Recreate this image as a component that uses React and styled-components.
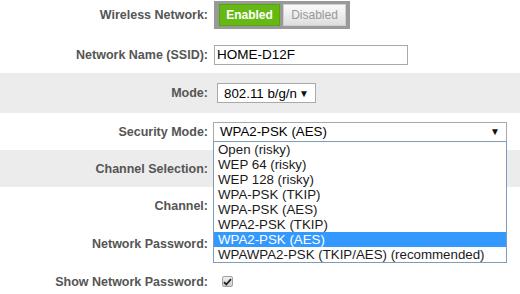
import React from "react";
import styled, { createGlobalStyle } from "styled-components";

const GlobalStyle = createGlobalStyle`
  body {
    margin: 0;
    background: #ffffff;
    font-family: "Liberation Sans", Arial, sans-serif;
  }
`;

const securityOptions = [
  "Open (risky)",
  "WEP 64 (risky)",
  "WEP 128 (risky)",
  "WPA-PSK (TKIP)",
  "WPA-PSK (AES)",
  "WPA2-PSK (TKIP)",
  "WPA2-PSK (AES)",
  "WPAWPA2-PSK (TKIP/AES) (recommended)",
];

const Check = () => (
  <svg width="9" height="8" viewBox="0 0 9 8">
    <path d="M1 4.2 L3.3 6.5 L8 1.2" fill="none" stroke="#222" strokeWidth="1.8" />
  </svg>
);

const App = () => {
  return (
    <>
      <GlobalStyle />
      <Form>
        <Row $h={30}>
          <Label>Wireless Network:</Label>
          <Toggle>
            <ToggleButton $on>Enabled</ToggleButton>
            <ToggleButton>Disabled</ToggleButton>
          </Toggle>
        </Row>
        <Row $h={43} $top={6}>
          <Label>Network Name (SSID):</Label>
          <TextInput>HOME-D12F</TextInput>
        </Row>
        <Row $h={40} $shade>
          <Label>Mode:</Label>
          <Select $w={99} $ml={3}>
            <span>802.11 b/g/n</span>
            <Arrow>▼</Arrow>
          </Select>
        </Row>
        <Row $h={37}>
          <Label>Security Mode:</Label>
          <SelectWrap>
            <Select $w={294} $ml={-1}>
              <span>WPA2-PSK (AES)</span>
              <Arrow>▼</Arrow>
            </Select>
            <OptionList>
              {securityOptions.map((opt) => (
                <Option key={opt} $active={opt === "WPA2-PSK (AES)"}>
                  {opt}
                </Option>
              ))}
            </OptionList>
          </SelectWrap>
        </Row>
        <Row $h={37} $shade>
          <Label>Channel Selection:</Label>
        </Row>
        <Row $h={38}>
          <Label>Channel:</Label>
        </Row>
        <Row $h={38}>
          <Label>Network Password:</Label>
        </Row>
        <Row $h={37}>
          <Label>Show Network Password:</Label>
          <CheckBox>
            <Check />
          </CheckBox>
        </Row>
      </Form>
    </>
  );
};

export default App;

const Form = styled.div`
  width: 520px;
  height: 294px;
  overflow: hidden;
`;

const Row = styled.div`
  display: flex;
  align-items: center;
  gap: 6px;
  height: ${(p) => p.$h}px;
  padding-top: ${(p) => p.$top || 0}px;
  box-sizing: border-box;
  background: ${(p) => (p.$shade ? "#ececec" : "#ffffff")};
`;

const Label = styled.div`
  width: 208px;
  flex-shrink: 0;
  text-align: right;
  font-size: 12.5px;
  font-weight: bold;
  color: #555555;
`;

const Toggle = styled.div`
  display: flex;
  gap: 3px;
  padding: 3px 4px 3px 5px;
  background: #999999;
`;

const ToggleButton = styled.div`
  width: ${(p) => (p.$on ? 61 : 63)}px;
  height: 22px;
  box-sizing: border-box;
  display: flex;
  align-items: center;
  justify-content: center;
  font-size: 12px;
  color: ${(p) => (p.$on ? "#ffffff" : "#999999")};
  font-weight: ${(p) => (p.$on ? "bold" : "normal")};
  background: ${(p) =>
    p.$on ? "#66b814" : "linear-gradient(#fbfbfb, #dedede)"};
  border: 1px solid ${(p) => (p.$on ? "#5aa30f" : "#d0d0d0")};
`;

const TextInput = styled.div`
  width: 194px;
  height: 20px;
  box-sizing: border-box;
  border: 1px solid #a9a9a9;
  padding: 0 2px;
  font-size: 13.5px;
  line-height: 18px;
  color: #000000;
  background: #ffffff;
`;

const SelectWrap = styled.div`
  position: relative;
`;

const Select = styled.div`
  width: ${(p) => p.$w}px;
  height: 20px;
  margin-left: ${(p) => p.$ml}px;
  box-sizing: border-box;
  border: 1px solid #a9a9a9;
  padding: 0 6px 0 6px;
  display: flex;
  align-items: center;
  justify-content: space-between;
  font-size: 13.3px;
  color: #000000;
  background: #ffffff;
`;

const Arrow = styled.span`
  font-size: 10px;
  color: #111111;
`;

const OptionList = styled.div`
  position: absolute;
  top: 19px;
  left: -1px;
  width: 294px;
  box-sizing: border-box;
  border: 1px solid #7f9db9;
  background: #ffffff;
  z-index: 2;
`;

const Option = styled.div`
  height: 15px;
  line-height: 15px;
  padding-left: 4px;
  font-size: 13.3px;
  color: ${(p) => (p.$active ? "#ffffff" : "#1a1a1a")};
  background: ${(p) => (p.$active ? "#3399ff" : "transparent")};
  white-space: nowrap;
`;

const CheckBox = styled.div`
  width: 11px;
  height: 11px;
  margin-left: 8px;
  box-sizing: border-box;
  border: 1px solid #a0a0a0;
  border-radius: 2px;
  background: linear-gradient(#f0f0f0, #cfcfcf);
  display: flex;
  align-items: center;
  justify-content: center;
`;
